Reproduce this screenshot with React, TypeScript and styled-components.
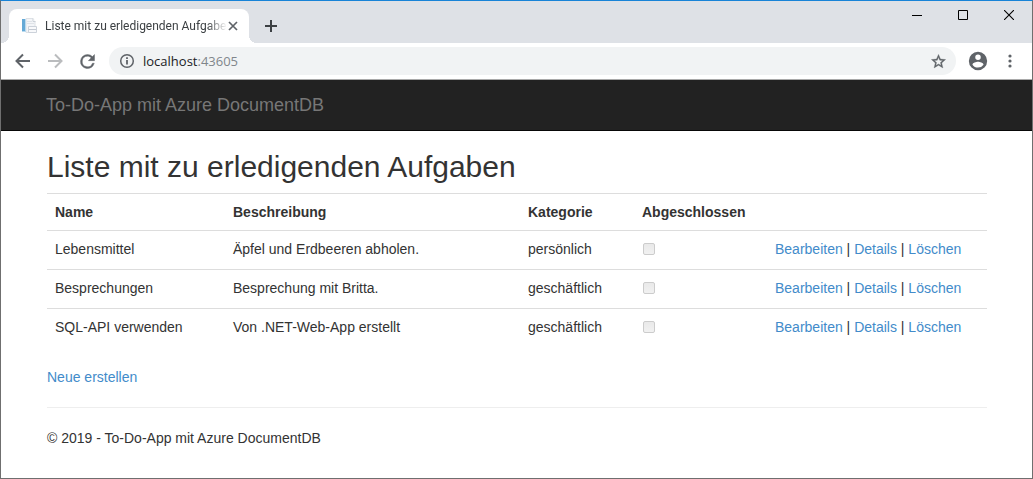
import React from "react";
import styled, { createGlobalStyle } from "styled-components";

const GlobalStyle = createGlobalStyle`
  *, *::before, *::after { box-sizing: border-box; }
  body {
    margin: 0;
    background: #fff;
    color: #333;
    font: 14px/20px "Liberation Sans", Arial, sans-serif;
  }
`;

const Window = styled.div`
  display: flex;
  flex-direction: column;
  min-height: 100vh;
  border: 1px solid #6f6f6f;
  border-top-color: #1883d7;
`;

const TitleBar = styled.header`
  display: flex;
  align-items: flex-end;
  height: 42px;
  padding-left: 8px;
  background: #dee1e6;
`;

const Tab = styled.div`
  position: relative;
  display: flex;
  align-items: center;
  width: 240px;
  height: 34px;
  padding: 0 10px 0 12px;
  border-radius: 8px 8px 0 0;
  background: #fff;

  &::before,
  &::after {
    content: "";
    position: absolute;
    bottom: 0;
    width: 8px;
    height: 8px;
  }
  &::before {
    right: 100%;
    background: radial-gradient(circle at 0 0, transparent 8px, #fff 8px);
  }
  &::after {
    left: 100%;
    background: radial-gradient(circle at 100% 0, transparent 8px, #fff 8px);
  }
`;

const TabTitle = styled.span`
  flex: 1;
  min-width: 0;
  margin-left: 8px;
  overflow: hidden;
  white-space: nowrap;
  color: #3c4043;
  font: 12px/20px Roboto, "Segoe UI", sans-serif;
  mask-image: linear-gradient(to right, #000 calc(100% - 20px), transparent);
`;

const IconButton = styled.button<{ $width: number; $height: number; $color?: string }>`
  display: flex;
  flex: none;
  align-items: center;
  justify-content: center;
  width: ${(p) => p.$width}px;
  height: ${(p) => p.$height}px;
  padding: 0;
  border: 0;
  background: none;
  color: ${(p) => p.$color ?? "#5f6368"};
`;

const WindowControls = styled.div`
  display: flex;
  align-self: flex-start;
  margin-left: auto;
`;

const Toolbar = styled.div`
  display: flex;
  align-items: center;
  height: 37px;
  padding: 0 6px;
  border-bottom: 1px solid #a9a9a9;
  background: #fff;
`;

const AddressBar = styled.div`
  display: flex;
  flex: 1;
  align-items: center;
  height: 28px;
  margin: 0 6px;
  padding: 0 4px 0 10px;
  border-radius: 14px;
  background: #f1f3f4;
`;

const Url = styled.div`
  flex: 1;
  margin-left: 8px;
  color: #202124;
  font: 13px/20px "Open Sans", "Segoe UI", sans-serif;
`;

const Port = styled.span`
  color: #80868b;
`;

const NavBar = styled.nav`
  display: flex;
  align-items: center;
  height: 51px;
  padding: 0 45px;
  border-bottom: 1px solid #080808;
  background: #222;
`;

const Brand = styled.a`
  color: #777;
  font-size: 18px;
  line-height: 20px;
  text-decoration: none;
`;

const Page = styled.main`
  padding: 19px 45px 30px 46px;
`;

const Heading = styled.h2`
  margin: 0 0 10px;
  font-size: 30px;
  font-weight: 400;
  line-height: 33px;
`;

const Table = styled.table`
  width: 100%;
  margin-bottom: 20px;
  border-collapse: separate;
  border-spacing: 0;
  table-layout: fixed;
`;

const Column = styled.col<{ $width: number }>`
  width: ${(p) => p.$width}px;
`;

const HeadCell = styled.th`
  padding: 8px;
  border-top: 1px solid #ddd;
  text-align: left;
`;

const Cell = styled.td`
  height: 39px;
  padding: 8px;
  border-top: 1px solid #ddd;
  vertical-align: top;
`;

const CheckBox = styled.input`
  display: block;
  width: 12px;
  height: 12px;
  margin: 4px 1px 0;
  appearance: none;
  border: 1px solid #ccc;
  border-radius: 2px;
  background: linear-gradient(#e9e9e9, #f1f1f1);
`;

const Link = styled.a`
  color: #428bca;
  text-decoration: none;
`;

const Rule = styled.hr`
  margin: 20px 0;
  border: 0;
  border-top: 1px solid #eee;
`;

const Text = styled.p`
  margin: 0;
`;

const PageIcon = () => (
  <svg width="16" height="16" viewBox="0 0 16 16" aria-hidden="true">
    <path d="M5 .5h7l2 3v11H5z" fill="#f3f5f8" stroke="#dde1e6" />
    <path d="M12 .5v3h2.500" fill="#fff" stroke="#cbd1d8" />
    <path d="M6 3.500h5M6 5.500h7" stroke="#dfe3e8" />
    <path d="M1 1h4v13H1z" fill="#b9d9ee" />
    <path d="M1 1h3v12H1z" fill="#65a9d6" />
    <path d="M7.500 8.500h8v6h-8z" fill="#f8f9fb" stroke="#ccd2da" />
    <path d="M8 11.500h7" stroke="#c3c9d2" />
  </svg>
);

const BackIcon = () => (
  <svg width="16" height="16" viewBox="0 0 16 16" fill="none" stroke="currentColor" strokeWidth="2" aria-hidden="true">
    <path d="M15 8H2.500M8 1.500 1.500 8 8 14.500" />
  </svg>
);

const ForwardIcon = () => (
  <svg width="16" height="16" viewBox="0 0 16 16" fill="none" stroke="currentColor" strokeWidth="2" aria-hidden="true">
    <path d="M1 8h12.500M8 1.500 14.500 8 8 14.500" />
  </svg>
);

const ReloadIcon = () => (
  <svg width="21" height="21" viewBox="0 0 24 24" fill="currentColor" stroke="currentColor" strokeWidth=".5" aria-hidden="true">
    <path d="M17.650 6.350A7.958 7.958 0 0 0 12 4a8 8 0 1 0 7.730 10h-2.080A6 6 0 1 1 12 6c1.660 0 3.140.69 4.220 1.780L13 11h7V4z" />
  </svg>
);

const InfoIcon = () => (
  <svg width="16" height="16" viewBox="0 0 16 16" fill="none" stroke="#5f6368" strokeWidth="1.500" aria-hidden="true">
    <circle cx="8" cy="8" r="6.300" />
    <path d="M8 7v4.500M8 4.300v1.600" strokeWidth="1.800" />
  </svg>
);

const StarIcon = () => (
  <svg width="17" height="17" viewBox="0 0 24 24" fill="currentColor" stroke="currentColor" strokeWidth=".5" aria-hidden="true">
    <path d="m22 9.240-7.190-.62L12 2 9.190 8.630 2 9.240l5.460 4.730L5.820 21 12 17.270 18.180 21l-1.630-7.030zM12 15.400l-3.760 2.270 1-4.280-3.320-2.880 4.380-.38L12 6.100l1.710 4.040 4.380.38-3.320 2.880 1 4.280z" />
  </svg>
);

const ProfileIcon = () => (
  <svg width="22" height="22" viewBox="0 0 24 24" fill="currentColor" aria-hidden="true">
    <path d="M12 2a10 10 0 1 0 0 20 10 10 0 0 0 0-20m0 3a3 3 0 1 1 0 6 3 3 0 0 1 0-6m0 14.200a7.200 7.200 0 0 1-6-3.220c.03-1.990 4-3.080 6-3.080s5.970 1.090 6 3.080a7.200 7.200 0 0 1-6 3.220" />
  </svg>
);

const MenuIcon = () => (
  <svg width="4" height="16" viewBox="0 0 4 16" fill="currentColor" aria-hidden="true">
    <circle cx="2" cy="3" r="1.600" />
    <circle cx="2" cy="8" r="1.600" />
    <circle cx="2" cy="13" r="1.600" />
  </svg>
);

const CloseTabIcon = () => (
  <svg width="10" height="10" viewBox="0 0 10 10" stroke="currentColor" strokeWidth="1.700" aria-hidden="true">
    <path d="m1 1 8 8M9 1 1 9" />
  </svg>
);

const PlusIcon = () => (
  <svg width="12" height="12" viewBox="0 0 12 12" stroke="currentColor" strokeWidth="2" aria-hidden="true">
    <path d="M6 0v12M0 6h12" />
  </svg>
);

const MinimizeIcon = () => (
  <svg width="10" height="10" viewBox="0 0 10 10" stroke="currentColor" aria-hidden="true">
    <path d="M0 5.500h10" />
  </svg>
);

const MaximizeIcon = () => (
  <svg width="10" height="10" viewBox="0 0 10 10" fill="none" stroke="currentColor" aria-hidden="true">
    <path d="M.5.5h9v9h-9z" />
  </svg>
);

const CloseIcon = () => (
  <svg width="10" height="10" viewBox="0 0 10 10" stroke="currentColor" strokeWidth="1.100" aria-hidden="true">
    <path d="m0 0 10 10M10 0 0 10" />
  </svg>
);

const items = [
  { name: "Lebensmittel", description: "Äpfel und Erdbeeren abholen.", category: "persönlich" },
  { name: "Besprechungen", description: "Besprechung mit Britta.", category: "geschäftlich" },
  { name: "SQL-API verwenden", description: "Von .NET-Web-App erstellt", category: "geschäftlich" },
];

export default function App() {
  return (
    <>
      <GlobalStyle />
      <Window>
        <TitleBar>
          <Tab>
            <PageIcon />
            <TabTitle>Liste mit zu erledigenden Aufgaben</TabTitle>
            <IconButton $width={12} $height={16} aria-label="Tab schließen">
              <CloseTabIcon />
            </IconButton>
          </Tab>
          <IconButton $width={44} $height={34} $color="#3c4043" aria-label="Neuer Tab">
            <PlusIcon />
          </IconButton>
          <WindowControls>
            <IconButton $width={46} $height={28} $color="#000" aria-label="Minimieren">
              <MinimizeIcon />
            </IconButton>
            <IconButton $width={46} $height={28} $color="#000" aria-label="Maximieren">
              <MaximizeIcon />
            </IconButton>
            <IconButton $width={46} $height={28} $color="#000" aria-label="Schließen">
              <CloseIcon />
            </IconButton>
          </WindowControls>
        </TitleBar>
        <Toolbar>
          <IconButton $width={32} $height={28} aria-label="Zurück">
            <BackIcon />
          </IconButton>
          <IconButton $width={32} $height={28} $color="#babcbe" aria-label="Vorwärts" disabled>
            <ForwardIcon />
          </IconButton>
          <IconButton $width={32} $height={28} aria-label="Neu laden">
            <ReloadIcon />
          </IconButton>
          <AddressBar>
            <InfoIcon />
            <Url>
              localhost<Port>:43605</Port>
            </Url>
            <IconButton $width={28} $height={28} aria-label="Lesezeichen">
              <StarIcon />
            </IconButton>
          </AddressBar>
          <IconButton $width={32} $height={28} aria-label="Profil">
            <ProfileIcon />
          </IconButton>
          <IconButton $width={32} $height={28} aria-label="Menü">
            <MenuIcon />
          </IconButton>
        </Toolbar>
        <NavBar>
          <Brand href="#">To-Do-App mit Azure DocumentDB</Brand>
        </NavBar>
        <Page>
          <Heading>Liste mit zu erledigenden Aufgaben</Heading>
          <Table>
            <colgroup>
              <Column $width={178} />
              <Column $width={295} />
              <Column $width={114} />
              <Column $width={133} />
              <Column $width={220} />
            </colgroup>
            <thead>
              <tr>
                <HeadCell scope="col">Name</HeadCell>
                <HeadCell scope="col">Beschreibung</HeadCell>
                <HeadCell scope="col">Kategorie</HeadCell>
                <HeadCell scope="col">Abgeschlossen</HeadCell>
                <HeadCell />
              </tr>
            </thead>
            <tbody>
              {items.map((item) => (
                <tr key={item.name}>
                  <Cell>{item.name}</Cell>
                  <Cell>{item.description}</Cell>
                  <Cell>{item.category}</Cell>
                  <Cell>
                    <CheckBox type="checkbox" disabled aria-label={`${item.name} abgeschlossen`} />
                  </Cell>
                  <Cell>
                    <Link href="#">Bearbeiten</Link> | <Link href="#">Details</Link> | <Link href="#">Löschen</Link>
                  </Cell>
                </tr>
              ))}
            </tbody>
          </Table>
          <Text>
            <Link href="#">Neue erstellen</Link>
          </Text>
          <Rule />
          <footer>
            <Text>© 2019 - To-Do-App mit Azure DocumentDB</Text>
          </footer>
        </Page>
      </Window>
    </>
  );
}
